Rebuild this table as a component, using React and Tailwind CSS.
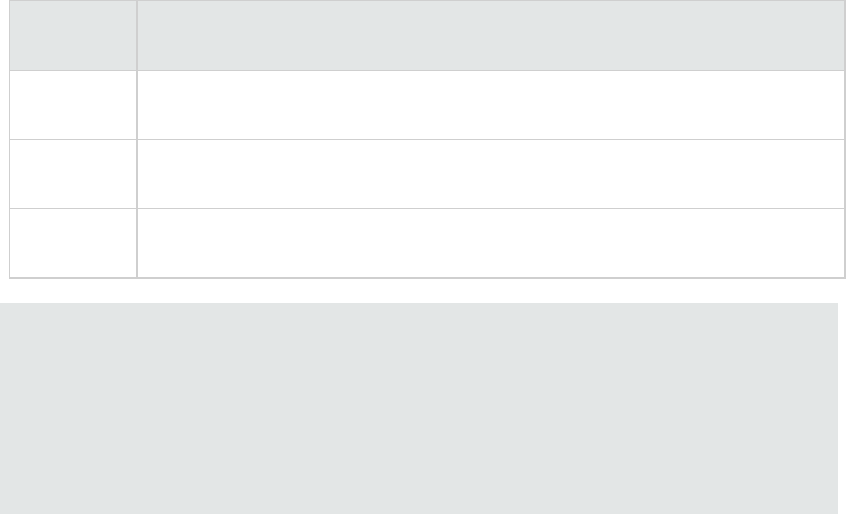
export default function App() {
  const rows = [0, 1, 2]
  return (
    <div className="w-[846px] h-[514px] bg-white overflow-hidden" style={{ fontFamily: '"Liberation Sans", Arial, sans-serif' }}>
      <div className="ml-[9px] w-[837px] border-l border-t border-r-2 border-b-2 border-[#cfcfcf]">
        <div className="flex h-[69px] bg-[#e3e6e6]">
          <div className="w-[128px] border-r-2 border-[#cfcfcf]"></div>
          <div className="flex-1"></div>
        </div>
        {rows.map((r) => (
          <div key={r} className="flex h-[69px] border-t border-[#cfcfcf] bg-white">
            <div className="w-[128px] border-r-2 border-[#cfcfcf]"></div>
            <div className="flex-1"></div>
          </div>
        ))}
      </div>
      <div className="mt-[24px] w-[838px] h-[211px] bg-[#e3e6e6]"></div>
    </div>
  )
}
